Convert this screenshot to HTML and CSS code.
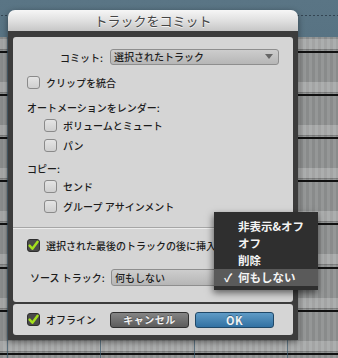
FILE: index.html
```html
<!DOCTYPE html>
<html lang="ja">
<head>
<meta charset="utf-8">
<title>トラックをコミット</title>
<link rel="stylesheet" href="styles.css">
</head>
<body>
<div class="desk">
  <div class="dialog">
    <div class="titlebar">トラックをコミット</div>
    <div class="frame">
      <div class="panel main">
        <div class="row commit-row">
          <span class="field-label">コミット:</span>
          <div class="select">選択されたトラック</div>
        </div>
        <div class="row gap7 lvl1">
          <span class="cb"></span><span class="txt">クリップを統合</span>
        </div>
        <div class="row gap7 heading">オートメーションをレンダー:</div>
        <div class="row lvl2">
          <span class="cb"></span><span class="txt">ボリュームとミュート</span>
        </div>
        <div class="row gap2 lvl2">
          <span class="cb"></span><span class="txt">パン</span>
        </div>
        <div class="row gap5 heading">コピー:</div>
        <div class="row lvl2">
          <span class="cb"></span><span class="txt">センド</span>
        </div>
        <div class="row gap2 lvl2">
          <span class="cb"></span><span class="txt">グループ アサインメント</span>
        </div>
        <div class="sep"></div>
        <div class="row gap7 lvl1 nowrap">
          <span class="cb checked"><svg viewBox="0 0 13 13" width="13" height="13"><path d="M2.6 6.6 L5.4 9.8 L10.6 2.8" fill="none" stroke="#a4e01c" stroke-width="2.4" stroke-linecap="round" stroke-linejoin="round"/></svg></span><span class="txt">選択された最後のトラックの後に挿入</span>
        </div>
        <div class="row source-row">
          <span class="src-label">ソース トラック:</span>
          <div class="select tall">何もしない</div>
        </div>
      </div>
      <div class="panel footer">
        <div class="offline">
          <span class="cb checked"><svg viewBox="0 0 13 13" width="13" height="13"><path d="M2.6 6.6 L5.4 9.8 L10.6 2.8" fill="none" stroke="#a4e01c" stroke-width="2.4" stroke-linecap="round" stroke-linejoin="round"/></svg></span><span class="txt">オフライン</span>
        </div>
        <button class="btn cancel">キャンセル</button>
        <button class="btn ok">OK</button>
      </div>
    </div>
  </div>
  <ul class="menu">
    <li>非表示&amp;オフ</li>
    <li>オフ</li>
    <li>削除</li>
    <li class="selected"><span class="mark">✓</span>何もしない</li>
  </ul>
</div>
</body>
</html>
```
FILE: styles.css
```css
* { box-sizing: border-box; }
html, body { margin: 0; padding: 0; }
body {
  width: 338px;
  height: 358px;
  overflow: hidden;
  font-family: "Noto Sans CJK JP", "Noto Sans", sans-serif;
  font-weight: 500;
  color: #1c1c1c;
}
.desk {
  position: relative;
  width: 338px;
  height: 358px;
  padding: 10px 0 0 8px;
  background:
    radial-gradient(circle, rgba(20,30,40,0.55) 0 0.6px, transparent 0.9px) 0 14px / 4px 3px repeat-x,
    linear-gradient(#5a7585, #587383) 0 0 / 100% 37px no-repeat,
    repeating-linear-gradient(90deg, transparent 0 7px, rgba(60,90,110,0.7) 7px 8px, transparent 8px 93.4px),
    repeating-linear-gradient(180deg, #111 0 2px, transparent 2px 31px, rgba(255,255,255,0.22) 31px 41px, rgba(0,0,0,0.15) 41px 42px, transparent 42px 43.1px) 0 8px,
    repeating-linear-gradient(90deg, #898b8b 0 3px, #959797 3px 6px);
}
.dialog {
  width: 290px;
  box-shadow: 0 2px 6px rgba(0,0,0,0.45);
  border-radius: 7px 7px 0 0;
}
.titlebar {
  height: 21px;
  line-height: 21px;
  text-align: center;
  font-size: 13px;
  font-weight: 400;
  color: #454545;
  text-shadow: 0 1px 0 rgba(255,255,255,0.7);
  background: linear-gradient(#f6f6f6, #dedede 55%, #c6c6c6);
  border-radius: 7px 7px 0 0;
}
.frame {
  background: #3c3c3c;
  padding: 6px 5px 5px;
}
.panel {
  background: #d5d5d5;
  border-radius: 3px;
}
.main {
  height: 265px;
  padding-top: 11px;
  overflow: hidden;
}
.row {
  height: 18px;
  display: flex;
  align-items: center;
  font-size: 10px;
}
.gap2 { margin-top: 2px; }
.gap5 { margin-top: 5px; }
.gap7 { margin-top: 7px; }
.lvl1 { padding-left: 14px; }
.lvl2 { padding-left: 31px; }
.heading { padding-left: 14px; }
.nowrap { white-space: nowrap; }
.txt { margin-left: 6px; }
.cb {
  flex: none;
  width: 13px;
  height: 13px;
  border: 1px solid #8a8a8a;
  border-radius: 3px;
  background: linear-gradient(#e4e4e4, #cfcfcf);
  display: inline-flex;
  align-items: center;
  justify-content: center;
}
.cb.checked {
  background: #4a4a4a;
  border-color: #2e2e2e;
}
.cb svg { display: block; margin: -1px; }
.field-label {
  width: 90px;
  text-align: right;
}
.select {
  position: relative;
  margin-left: 7px;
  width: 169px;
  height: 16px;
  line-height: 14px;
  padding-left: 3px;
  border: 1px solid #8e8e8e;
  border-radius: 3px;
  background: linear-gradient(#cdcdcd, #b6b6b6);
  font-size: 10px;
  color: #1e1e1e;
}
.select::after {
  content: "";
  position: absolute;
  right: 5px;
  top: 4px;
  border-left: 4px solid transparent;
  border-right: 4px solid transparent;
  border-top: 5px solid #666;
}
.select.tall { height: 17px; line-height: 15px; }
.sep {
  margin-top: 12px;
  height: 2px;
  border-top: 1px solid #a6a6a6;
  border-bottom: 1px solid #ececec;
}
.source-row { margin-top: 14px; }
.src-label {
  width: 98px;
  padding-left: 17px;
  white-space: nowrap;
}
.source-row .select { margin-left: 0; }
.footer {
  margin-top: 2px;
  height: 31px;
  display: flex;
  align-items: center;
  padding-left: 14px;
}
.offline {
  width: 83px;
  display: flex;
  align-items: center;
  font-size: 10px;
}
.btn {
  width: 79px;
  height: 16px;
  padding: 0;
  border-radius: 3px;
  font-family: "Noto Sans CJK JP", "Noto Sans", sans-serif;
  font-size: 10px;
  font-weight: bold;
  letter-spacing: 0.5px;
  color: #f2f2f2;
  text-shadow: 0 -1px 0 rgba(0,0,0,0.35);
  line-height: 14px;
}
.cancel {
  border: 1px solid #303030;
  background: linear-gradient(#858585, #5c5c5c);
}
.ok {
  margin-left: 6px;
  border: 1px solid #1f4868;
  background: linear-gradient(#5f9bc6, #3271a2);
  font-size: 11px;
}
.menu {
  position: absolute;
  left: 214px;
  top: 212px;
  width: 104px;
  margin: 0;
  padding: 6px 0 4px;
  list-style: none;
  background: #2f2f2f;
  box-shadow: -1px 3px 7px rgba(0,0,0,0.55);
}
.menu li {
  position: relative;
  height: 17px;
  line-height: 17px;
  padding-left: 24px;
  font-size: 11.5px;
  font-weight: bold;
  color: #f4f4f4;
}
.menu li.selected { background: #5a5a5a; }
.mark {
  position: absolute;
  left: 10px;
  top: 0;
}
```
